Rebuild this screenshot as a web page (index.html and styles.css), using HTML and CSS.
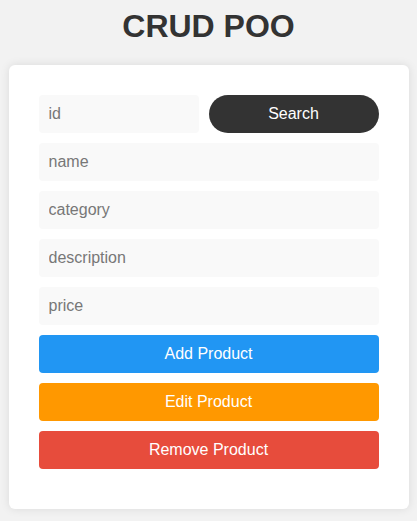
FILE: index.html
```html
<!DOCTYPE html>
<html>
<head>
<meta charset="utf-8">
<link rel="stylesheet" href="styles.css">
</head>
<body>
<h1 class="title">CRUD POO</h1>
<div class="card">
  <div class="row">
    <input class="field id-field" type="text" placeholder="id">
    <button class="btn search">Search</button>
  </div>
  <input class="field" type="text" placeholder="name">
  <input class="field" type="text" placeholder="category">
  <input class="field" type="text" placeholder="description">
  <input class="field" type="text" placeholder="price">
  <button class="btn add">Add Product</button>
  <button class="btn edit">Edit Product</button>
  <button class="btn remove">Remove Product</button>
</div>
</body>
</html>
```

FILE: styles.css
```css
html, body {
  margin: 0;
  padding: 0;
}
body {
  background: #f2f2f2;
  font-family: "Liberation Sans", Arial, sans-serif;
  padding: 8px 0;
}
.title {
  margin: 0 0 20px;
  text-align: center;
  font-size: 32px;
  font-weight: bold;
  color: #333;
  line-height: 37px;
}
.card {
  width: 400px;
  box-sizing: border-box;
  margin: 0 auto;
  background: #fff;
  border-radius: 6px;
  box-shadow: 0 0 10px rgba(0,0,0,0.1);
  padding: 30px 30px 40px;
  display: flex;
  flex-direction: column;
  gap: 10px;
}
.row {
  display: flex;
  gap: 10px;
}
.field {
  height: 38px;
  box-sizing: border-box;
  border: none;
  border-radius: 4px;
  background: #f9f9f9;
  padding: 0 10px;
  font-family: "Liberation Sans", Arial, sans-serif;
  font-size: 16px;
  color: #333;
  outline: none;
  width: 100%;
}
.field::placeholder {
  color: #777;
}
.id-field {
  width: 160px;
  flex: none;
}
.btn {
  height: 38px;
  border: none;
  border-radius: 4px;
  color: #fff;
  font-family: "Liberation Sans", Arial, sans-serif;
  font-size: 16px;
  padding: 0;
  width: 100%;
}
.search {
  flex: 1;
  background: #333;
  border-radius: 19px;
}
.add { background: #2196f3; }
.edit { background: #ff9800; }
.remove { background: #e74c3c; }
```
